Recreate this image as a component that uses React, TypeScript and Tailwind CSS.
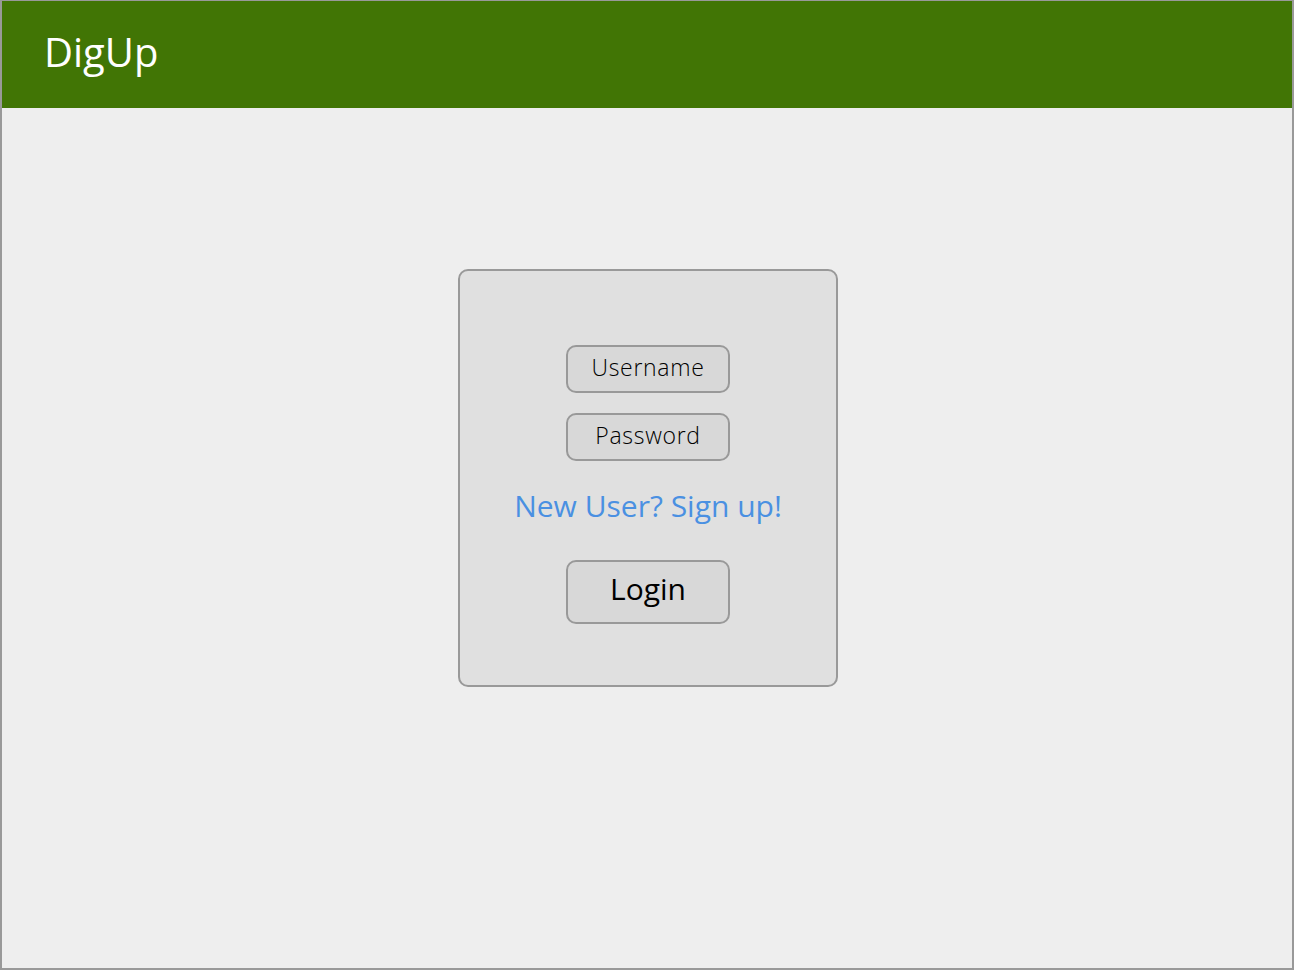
export default function App() {
  return (
    <div className="h-[970px] w-[1294px] border-x-2 border-t border-b-2 border-[#999999] bg-[#eeeeee] flex flex-col" style={{ fontFamily: '"Open Sans", sans-serif' }}>
      {/* Header */}
      <header className="h-[107px] bg-[#417505] flex items-center pl-[42px] shrink-0">
        <h1 className="text-[40px] text-white leading-none pb-[6px]">DigUp</h1>
      </header>

      {/* Login card */}
      <main className="flex-1 flex justify-center pt-[161px] pl-[2px]">
        <div className="w-[380px] h-[418px] bg-[#e0e0e0] border-2 border-[#999999] rounded-[10px] flex flex-col items-center pt-[74px]">
          <div className="w-[164px] h-[48px] bg-[#d8d8d8] border-2 border-[#999999] rounded-[10px] flex items-center justify-center text-[23px] font-light tracking-[0.7px] text-black pb-[3px]">
            Username
          </div>
          <div className="mt-[20px] w-[164px] h-[48px] bg-[#d8d8d8] border-2 border-[#999999] rounded-[10px] flex items-center justify-center text-[23px] font-light tracking-[0.7px] text-black pb-[3px]">
            Password
          </div>
          <a className="mt-[22px] text-[30px] leading-[46px] text-[#4a90e2] cursor-pointer">New User? Sign up!</a>
          <button className="mt-[31px] w-[164px] h-[64px] bg-[#d8d8d8] border-2 border-[#999999] rounded-[10px] text-[30px] leading-none text-black pb-[6px]">
            Login
          </button>
        </div>
      </main>
    </div>
  );
}
